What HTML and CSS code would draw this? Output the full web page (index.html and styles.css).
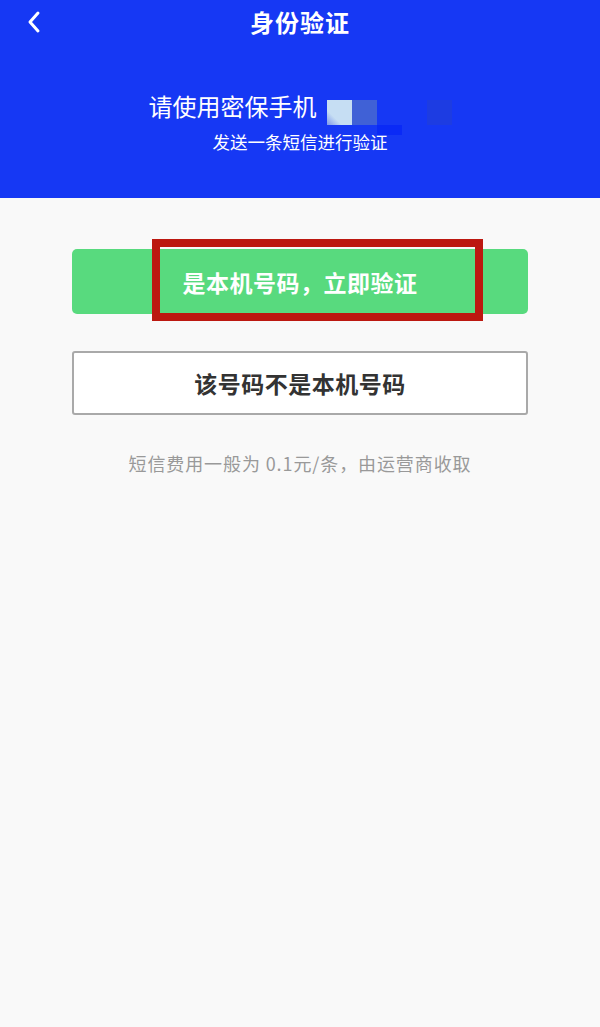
FILE: index.html
```html
<!DOCTYPE html>
<html lang="zh-CN">
<head>
<meta charset="utf-8">
<title>身份验证</title>
<link rel="stylesheet" href="styles.css">
</head>
<body>
<header class="header">
  <div class="topbar">
    <span class="back" aria-label="返回">
      <svg width="16" height="24" viewBox="0 0 16 24"><path d="M12 3 L4 12 L12 21" fill="none" stroke="#fff" stroke-width="3" stroke-linecap="round" stroke-linejoin="round"/></svg>
    </span>
    <h1 class="title">身份验证</h1>
  </div>
  <div class="msg-row">
    <span class="msg">请使用密保手机</span>
    <span class="mask" aria-hidden="true">
      <i class="c c1"></i><i class="c c2"></i><i class="c c0"></i><i class="c c0"></i><i class="c c5"></i>
      <i class="c c0"></i><i class="c c0"></i><i class="c c3"></i><i class="c c0"></i><i class="c c0"></i>
    </span>
  </div>
  <p class="sub">发送一条短信进行验证</p>
</header>
<main class="content">
  <div class="btn-wrap">
    <button class="btn btn-primary">是本机号码，立即验证</button>
    <span class="highlight"></span>
  </div>
  <button class="btn btn-outline">该号码不是本机号码</button>
  <p class="note">短信费用一般为 0.1元/条，由运营商收取</p>
</main>
</body>
</html>
```
FILE: styles.css
```css
* { box-sizing: border-box; }
html, body { margin: 0; padding: 0; }
body {
  width: 600px;
  min-height: 1027px;
  background: #f9f9f9;
  font-family: "Noto Sans CJK SC", "Noto Sans", sans-serif;
}
.header {
  height: 198px;
  background: #1638f4;
  color: #fff;
  display: flex;
  flex-direction: column;
  align-items: center;
}
.topbar {
  position: relative;
  width: 100%;
  height: 44px;
  display: flex;
  justify-content: center;
  align-items: center;
}
.back {
  position: absolute;
  left: 26px;
  top: 10px;
  width: 16px;
  height: 24px;
  display: flex;
}
.title {
  margin: 0;
  font-size: 24px;
  font-weight: 700;
  letter-spacing: 1px;
  line-height: 44px;
}
.msg-row {
  margin-top: 44px;
  height: 36px;
  display: flex;
  align-items: flex-start;
}
.msg {
  font-size: 24px;
  line-height: 36px;
}
.mask {
  margin-left: 10px;
  margin-top: 12px;
  display: grid;
  grid-template-columns: repeat(5, 25px);
  grid-template-rows: 25px 10px;
  background: linear-gradient(#1a3ae8, #1a3ae8) 0 0 / 50px 25px no-repeat;
}
.c { display: block; }
.c1 { background: linear-gradient(225deg, #c6def3 70%, #7d97ea 100%); }
.c2 { background: #4061d6; }
.c3 { background: #0a2af6; }
.c5 { background: #1d3ce2; }
.sub {
  position: relative;
  margin: 6px 0 0 0;
  font-size: 17.5px;
  line-height: 24px;
}
.content {
  padding: 51px 72px 0;
  display: flex;
  flex-direction: column;
}
.btn-wrap {
  position: relative;
  display: flex;
}
.btn {
  width: 100%;
  font-family: "Noto Sans CJK SC", "Noto Sans", sans-serif;
  font-weight: 700;
  font-size: 23px;
  letter-spacing: 0.5px;
  cursor: pointer;
}
.btn-primary {
  height: 65px;
  border: none;
  border-radius: 5px;
  background: #58da7e;
  color: #fff;
}
.highlight {
  position: absolute;
  left: 80px;
  top: -10px;
  width: 331px;
  height: 82px;
  border: 8px solid #bc1810;
  pointer-events: none;
}
.btn-outline {
  margin-top: 37px;
  height: 64px;
  border: 2px solid #a9a9a9;
  border-radius: 3px;
  background: #fff;
  color: #333;
}
.note {
  margin: 36px 0 0;
  text-align: center;
  font-size: 18px;
  line-height: 24px;
  letter-spacing: 0.9px;
  color: #999;
}
```
